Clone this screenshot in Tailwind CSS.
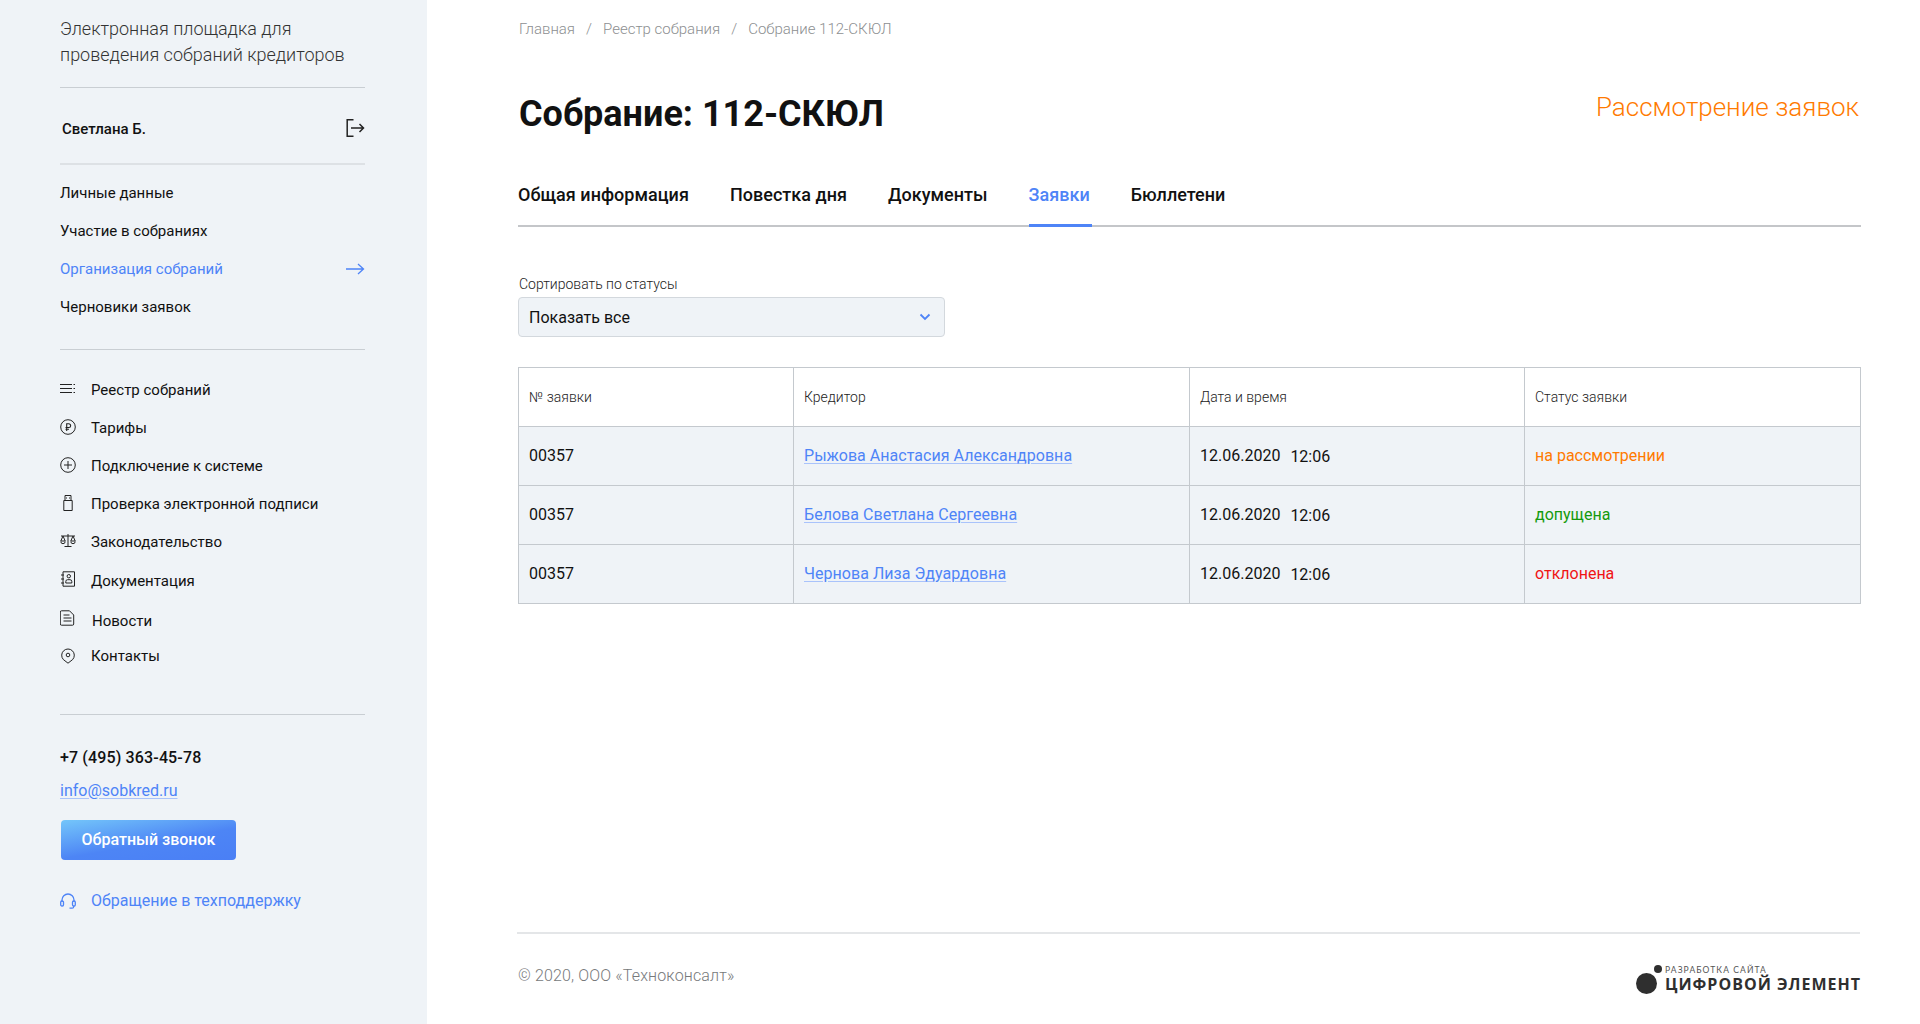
<!DOCTYPE html>
<html lang="ru">
<head>
<meta charset="utf-8">
<script src="https://cdn.jsdelivr.net/npm/@tailwindcss/browser@4"></script>
</head>
<body class="font-['Roboto',sans-serif] bg-white text-[#111]">
<div class="flex w-[1920px] h-[1024px] overflow-hidden">
  <aside class="w-[427px] shrink-0 bg-[#eff3f7] pl-[60px] pr-[62px] pt-[16px] flex flex-col">
    <div class="text-[18px] leading-[26px] font-light text-[#333] w-[305px]">Электронная площадка для<br>проведения собраний кредиторов</div>
    <div class="mt-[19px] h-px bg-[#c9ced3]"></div>
    <div class="h-[75px] flex items-center justify-between pl-[2px] pt-[6px]">
      <span class="text-[15px] font-medium mt-[2px]">Светлана Б.</span>
      <svg class="w-[20px] h-[20px] -mt-[1px]" viewBox="0 0 20 20" fill="none" stroke="#222" stroke-width="1.5"><path d="M8.5 1.7H2.2v16.6h6.3M6 10h12.5M14.5 6l4 4-4 4"/></svg>
    </div>
    <div class="h-[2px] bg-[#dde1e5]"></div>
    <nav class="mt-[9px] flex flex-col text-[15px] text-[#111]">
      <a class="h-[38px] flex items-center">Личные данные</a>
      <a class="h-[38px] flex items-center">Участие в собраниях</a>
      <a class="h-[38px] flex items-center justify-between text-[#4e84f7]">Организация собраний
        <svg class="w-[20px] h-[12px]" viewBox="0 0 20 12" fill="none" stroke="#4e84f7" stroke-width="1.3"><path d="M1 6h17.5M13 1l5.5 5-5.5 5"/></svg>
      </a>
      <a class="h-[38px] flex items-center">Черновики заявок</a>
    </nav>
    <div class="mt-[23px] h-px bg-[#c9ced3]"></div>
    <nav class="mt-[21px] flex flex-col text-[15px] text-[#111]">
      <a class="h-[38px] flex items-center gap-[15px]">
        <svg class="w-[16px] h-[16px] shrink-0 -mt-[2px]" viewBox="0 0 16 16" fill="none" stroke="#222" stroke-width="1"><path d="M0 3.5h12M0 7.5h12M0 11.5h12M13.500 3.5h1.500M13.500 7.500h1.500M13.500 11.500h1.500"/></svg>Реестр собраний</a>
      <a class="h-[38px] flex items-center gap-[15px]">
        <svg class="w-[16px] h-[16px] shrink-0 -mt-[2px]" viewBox="0 0 16 16" fill="none" stroke="#222" stroke-width="1"><circle cx="8" cy="8" r="7.300"/><path d="M6.700 12V4.800h2.100a1.800 1.800 0 0 1 0 3.700H5.500M5.500 10.300h3.500" stroke-width="1.100"/></svg>Тарифы</a>
      <a class="h-[38px] flex items-center gap-[15px]">
        <svg class="w-[16px] h-[16px] shrink-0 -mt-[2px]" viewBox="0 0 16 16" fill="none" stroke="#222" stroke-width="1"><circle cx="8" cy="8" r="7.300"/><path d="M8 4v8M4 8h8"/></svg>Подключение к системе</a>
      <a class="h-[38px] flex items-center gap-[15px]">
        <svg class="w-[16px] h-[16px] shrink-0 -mt-[2px]" viewBox="0 0 16 16" fill="none" stroke="#222" stroke-width="1"><path d="M5 .5h6v5H5zM3.800 5.500h8.400v10H3.800zM6.500 2.500v1M9.500 2.500v1"/></svg>Проверка электронной подписи</a>
      <a class="h-[38px] flex items-center gap-[15px]">
        <svg class="w-[16px] h-[16px] shrink-0 -mt-[2px]" viewBox="0 0 16 16" fill="none" stroke="#222" stroke-width="1"><path d="M8 1v12M4.500 13.500h7M1 3h14M3 3 .8 8h4.400zM13 3l-2.200 5h4.400zM.8 8.500a2.200 2.200 0 0 0 4.400 0M10.800 8.500a2.200 2.200 0 0 0 4.400 0"/></svg>Законодательство</a>
      <a class="h-[40px] flex items-center gap-[15px]">
        <svg class="w-[16px] h-[16px] shrink-0 -mt-[4px]" viewBox="0 0 16 16" fill="none" stroke="#222" stroke-width="1"><path d="M3 .8h11.500v14.400H3zM1 4h3M1 8h3M1 12h3"/><circle cx="8.800" cy="5.200" r="1.700"/><path d="M5.800 12v-1.500a1.800 1.800 0 0 1 1.800-1.800h2.400a1.800 1.800 0 0 1 1.800 1.800V12z"/></svg>Документация</a>
      <a class="h-[38px] flex items-center gap-[16px]">
        <svg class="w-[15px] h-[16px] shrink-0 -mt-[4px]" viewBox="0 0 15 16" fill="none" stroke="#222" stroke-width="1"><path d="M1.500.8h8l4.200 4.200v9a1.200 1.200 0 0 1-1.200 1.200h-11a1.200 1.200 0 0 1-1.200-1.200V2a1.200 1.200 0 0 1 1.200-1.200zM3.500 5h6M3.500 8h8M3.500 11h8"/></svg><span class="pt-[3px] ml-[1px]">Новости</span></a>
      <a class="h-[36px] flex items-center gap-[15px]">
        <svg class="w-[16px] h-[16px] shrink-0 -mt-[2px]" viewBox="0 0 16 16" fill="none" stroke="#222" stroke-width="1"><path d="M8 15.200 3.300 11.500a6.300 6.300 0 1 1 9.400 0z"/><circle cx="8" cy="7" r="1.800"/></svg><span class="-mt-[2px]">Контакты</span></a>
    </nav>
    <div class="mt-[39px] h-px bg-[#c9ced3]"></div>
    <div class="mt-[33px] text-[16px] leading-[20px] font-medium tracking-[0.14px]">+7 (495) 363-45-78</div>
    <a class="mt-[13px] text-[16px] leading-[20px] text-[#4e84f7] underline decoration-[#a9c3fb] underline-offset-2 self-start">info@sobkred.ru</a>
    <button class="mt-[19px] w-[175px] h-[40px] ml-[1px] rounded-[4px] text-white text-[16px] font-medium bg-[linear-gradient(170deg,#74c6fa_0%,#4d85f5_55%,#4a7ff5_100%)]">Обратный звонок</button>
    <a class="mt-[31px] flex items-center gap-[15px] text-[16px] leading-[20px] text-[#4e84f7]">
      <svg class="w-[16px] h-[16px] shrink-0" viewBox="0 0 16 16" fill="none" stroke="#4e84f7" stroke-width="1.300"><path d="M2 9V7a6 6 0 0 1 12 0v2"/><rect x=".7" y="8" width="2.800" height="5" rx="1.200"/><rect x="12.500" y="8" width="2.800" height="5" rx="1.200"/><path d="M13.700 13v.7a1.500 1.500 0 0 1-1.500 1.500H9.500"/></svg>Обращение в техподдержку</a>
  </aside>
  <main class="flex-1 pl-[91px] pr-[60px] flex flex-col relative">
    <div class="pt-[20px] ml-[1px] text-[15px] leading-[18px] font-light text-[#8d8f91] flex gap-[11px]"><span>Главная</span><span>/</span><span>Реестр собрания</span><span>/</span><span>Собрание 112-СКЮЛ</span></div>
    <div class="mt-[53px] flex justify-between items-start">
      <h1 class="text-[36px] leading-[46px] font-bold text-[#111] ml-[1px]">Собрание: 112-СКЮЛ</h1>
      <div class="text-[26px] leading-[32px] font-light text-[#ff7a00] mr-[2px]">Рассмотрение заявок</div>
    </div>
    <div class="mt-[36px] border-b-2 border-[#c4c6c9] flex gap-[41px] h-[54px] text-[18px] font-medium tracking-[0.03px] items-start">
      <a class="h-[54px] pt-[10px] leading-[24px]">Общая информация</a>
      <a class="h-[54px] pt-[10px] leading-[24px]">Повестка дня</a>
      <a class="h-[54px] pt-[10px] leading-[24px]">Документы</a>
      <a class="h-[54px] pt-[10px] leading-[24px] text-[#4e84f7] border-b-[3px] border-[#4e84f7] pr-[2px] -mr-[2px]">Заявки</a>
      <a class="h-[54px] pt-[10px] leading-[24px]">Бюллетени</a>
    </div>
    <label class="mt-[48px] text-[14px] leading-[18px] font-light text-[#222] ml-[1px]">Сортировать по статусы</label>
    <div class="mt-[4px] w-[427px] h-[40px] rounded-[4px] bg-[#eff3f7] border border-[#d3d8dd] flex items-center justify-between pl-[10px] pr-[13px] text-[16px]">
      <span class="pt-[1px]">Показать все</span>
      <svg class="w-[12px] h-[8px]" viewBox="0 0 12 8" fill="none" stroke="#4e84f7" stroke-width="1.800"><path d="M1.500 1.500 6 6l4.500-4.500"/></svg>
    </div>
    <table class="mt-[30px] w-[1342px] border-collapse table-fixed text-[16px]">
      <colgroup><col class="w-[275px]"><col class="w-[396px]"><col class="w-[335px]"><col class="w-[336px]"></colgroup>
      <thead>
        <tr class="h-[59px] text-[14px] font-light text-[#222] text-left">
          <th class="font-light border border-[#c4c9ce] px-[10px]">№ заявки</th>
          <th class="font-light border border-[#c4c9ce] px-[10px]">Кредитор</th>
          <th class="font-light border border-[#c4c9ce] px-[10px]">Дата и время</th>
          <th class="font-light border border-[#c4c9ce] px-[10px]">Статус заявки</th>
        </tr>
      </thead>
      <tbody class="bg-[#eff3f7]">
        <tr class="h-[59px]">
          <td class="border border-[#c4c9ce] px-[10px]">00357</td>
          <td class="border border-[#c4c9ce] px-[10px]"><a class="text-[#4e84f7] tracking-[0.04px] underline decoration-[#a9c3fb] underline-offset-2">Рыжова Анастасия Александровна</a></td>
          <td class="border border-[#c4c9ce] px-[10px]">12.06.2020<span class="ml-[10px] relative top-px">12:06</span></td>
          <td class="border border-[#c4c9ce] px-[10px] text-[#ff7a00]">на рассмотрении</td>
        </tr>
        <tr class="h-[59px]">
          <td class="border border-[#c4c9ce] px-[10px]">00357</td>
          <td class="border border-[#c4c9ce] px-[10px]"><a class="text-[#4e84f7] tracking-[0.04px] underline decoration-[#a9c3fb] underline-offset-2">Белова Светлана Сергеевна</a></td>
          <td class="border border-[#c4c9ce] px-[10px]">12.06.2020<span class="ml-[10px] relative top-px">12:06</span></td>
          <td class="border border-[#c4c9ce] px-[10px] text-[#159a0d]">допущена</td>
        </tr>
        <tr class="h-[59px]">
          <td class="border border-[#c4c9ce] px-[10px]">00357</td>
          <td class="border border-[#c4c9ce] px-[10px]"><a class="text-[#4e84f7] tracking-[0.04px] underline decoration-[#a9c3fb] underline-offset-2">Чернова Лиза Эдуардовна</a></td>
          <td class="border border-[#c4c9ce] px-[10px]">12.06.2020<span class="ml-[10px] relative top-px">12:06</span></td>
          <td class="border border-[#c4c9ce] px-[10px] text-[#f01414]">отклонена</td>
        </tr>
      </tbody>
    </table>
    <div class="mt-auto mb-[20px] -ml-[1px] mr-[1px] border-t-2 border-[#e4e6e8] pt-[26px] flex justify-between items-start">
      <span class="text-[16px] leading-[20px] font-light tracking-[0.15px] text-[#77797b] mt-[6px] ml-[1px]">© 2020, ООО «Техноконсалт»</span>
      <div class="relative w-[225px] h-[44px] -mr-[1px]">
        <span class="absolute left-[18px] top-[5px] w-[8px] h-[8px] rounded-full bg-[#2f2f2f]"></span>
        <span class="absolute left-0 top-[13px] w-[21px] h-[21px] rounded-full bg-[#2f2f2f]"></span>
        <span class="absolute left-[29px] top-[5px] text-[8.500px] leading-[10px] tracking-[1.100px] text-[#555] font-['Lato',sans-serif]">РАЗРАБОТКА САЙТА</span>
        <span class="absolute right-0 top-[15px] text-[16px] leading-[18px] tracking-[1px] font-bold text-[#2f2f2f] whitespace-nowrap font-['Open_Sans',sans-serif]">ЦИФРОВОЙ ЭЛЕМЕНТ</span>
      </div>
    </div>
  </main>
</div>
</body>
</html>
